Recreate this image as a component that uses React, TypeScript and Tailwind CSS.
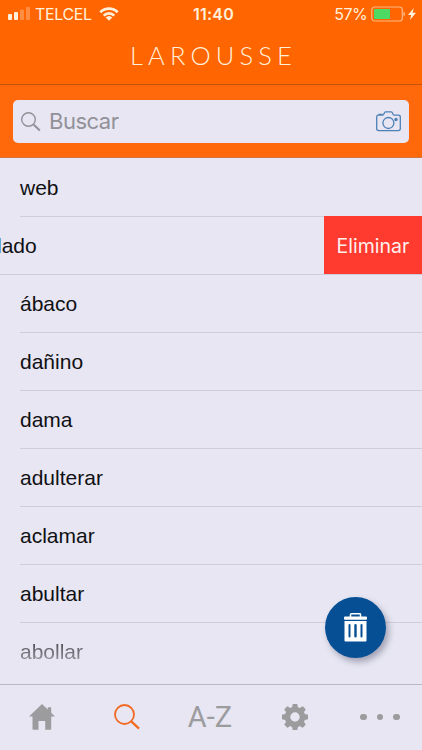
import React from "react";

const words = ["ábaco", "dañino", "dama", "adulterar", "aclamar", "abultar"];

function StatusBar() {
  return (
    <div className="grid h-7 grid-cols-3 items-center pl-2 pr-[6px] text-[16px] leading-none text-[#fff0dc] font-['Inter',sans-serif]">
      <div className="flex items-center">
        <svg width="22" height="14" viewBox="0 0 22 14" fill="currentColor">
          <rect x="0" y="7" width="4" height="6" rx="1" />
          <rect x="6" y="5" width="4" height="8" rx="1" />
          <rect x="12" y="2.5" width="4" height="10.5" rx="1" opacity=".3" />
          <rect x="18" y="0" width="4" height="13" rx="1" opacity=".3" />
        </svg>
        <span className="ml-[5px] w-[57px] whitespace-nowrap text-[16px] tracking-[-0.35px]">TELCEL</span>
        <svg className="ml-[7px]" width="20" height="14" viewBox="0 0 20 14" fill="none" stroke="currentColor" strokeWidth="2.7">
          <path d="M1.3 5.2a12.5 12.5 0 0 1 17.4 0" />
          <path d="M4.7 8.6a7.6 7.6 0 0 1 10.6 0" />
          <path d="M10 13.8 6.7 10.6a4.8 4.8 0 0 1 6.6 0Z" fill="currentColor" stroke="none" />
        </svg>
      </div>
      <div className="pl-[3px] text-center text-[16px] font-semibold tracking-[0.2px]">11:40</div>
      <div className="flex items-center justify-end">
        <span className="tracking-[-0.6px]">57%</span>
        <svg className="ml-[4px]" width="35" height="16" viewBox="0 0 35 16" fill="none">
          <rect x=".8" y="1" width="30.5" height="14" rx="2.8" stroke="#fff0dc" strokeOpacity=".6" strokeWidth="1.2" />
          <rect x="3" y="3" width="16" height="10" fill="#4cd964" />
          <path d="M32.5 5.5c2 .7 2 4.3 0 5Z" fill="#fff0dc" opacity=".6" />
        </svg>
        <svg className="ml-[2px]" width="8" height="12" viewBox="0 0 8 12" fill="currentColor">
          <path d="M5.7 0 0 7h3.2L2 12l6-7.2H4.7Z" />
        </svg>
      </div>
    </div>
  );
}

function SearchBar() {
  return (
    <div className="h-[74px] border-b border-t border-b-[#d3733e] border-t-[#c65108] bg-[#ff690b] px-[13px] pt-[15px]">
      <div className="flex h-[43px] items-center rounded-[5px] bg-[#e7e6f2] pl-2 pr-[8px]">
        <svg width="20" height="20" viewBox="0 0 20 20" fill="none" stroke="#929199" strokeWidth="1.4">
          <circle cx="7.5" cy="7.5" r="6.8" />
          <path d="m12.5 12.5 6.3 6" strokeWidth="2" />
        </svg>
        <span className="ml-2 pb-[2px] text-[22px] leading-none tracking-[-0.5px] text-[#929199] font-['Inter',sans-serif]">Buscar</span>
        <svg className="ml-auto" width="25" height="21" viewBox="0 0 25 21" fill="none" stroke="#4d81b5" strokeWidth="1.3">
          <path d="M2.5 4.2h4.2c1.5 0 1.3-3.3 2.8-3.3h5.8c1.5 0 1.3 3.3 2.8 3.3h4.2c1.2 0 2 .7 2 1.8v11.8c0 1.1-.8 1.8-2 1.8H2.5c-1.2 0-1.8-.7-1.8-1.8V6c0-1.1.6-1.8 1.800-1.8Z" />
          <circle cx="12.4" cy="12" r="5.5" />
          <circle cx="20" cy="8.5" r="1.1" fill="#4d81b5" />
          <path d="M3 4V3.3h3V4" />
        </svg>
      </div>
    </div>
  );
}

function Row({ children }: { children: React.ReactNode }) {
  return (
    <li className="h-[58px] pl-5">
      <div className="flex h-full items-center border-b border-[#cecdda]">{children}</div>
    </li>
  );
}

function TabBar() {
  return (
    <nav className="grid h-[66px] grid-cols-5 items-center border-t border-[#b9b8c6] bg-[#e7e6f2] pb-[2px] text-[#9c9c9e]">
      <div className="flex justify-center">
        <svg width="26" height="26" viewBox="0 0 26 26" fill="currentColor">
          <path d="M13 0 0 12.5h3.5V25q0 .8.8.8H9.5V17h6.700v8.8h5.2q.8 0 .8-.8V12.5H26l-3.8-3.7V3.200h-3.400v2.400Z" />
        </svg>
      </div>
      <div className="flex justify-center">
        <svg width="26" height="26" viewBox="0 0 26 26" fill="none" stroke="#f26a22">
          <circle cx="10.5" cy="10.5" r="9.5" strokeWidth="1.8" />
          <path d="m17 17.2 8 7.5" strokeWidth="2.3" />
        </svg>
      </div>
      <div className="pr-[2px] pt-px text-center text-[29px] leading-none font-['Roboto',sans-serif]">A-Z</div>
      <div className="flex justify-center">
        <svg width="26" height="26" viewBox="-13 -13 26 26" fill="none" stroke="currentColor">
          <circle r="7.5" strokeWidth="5.6" />
          <g fill="currentColor" stroke="none">
            <path id="tooth" d="m-3.2-8 .8-4.4q.1-.6.7-.6h3.4q.6 0 .7.6l.8 4.4Z" />
            <use href="#tooth" transform="rotate(45)" />
            <use href="#tooth" transform="rotate(90)" />
            <use href="#tooth" transform="rotate(135)" />
            <use href="#tooth" transform="rotate(180)" />
            <use href="#tooth" transform="rotate(225)" />
            <use href="#tooth" transform="rotate(270)" />
            <use href="#tooth" transform="rotate(315)" />
          </g>
        </svg>
      </div>
      <div className="flex justify-center gap-[10px] pt-px">
        <i className="size-[6.5px] rounded-full bg-current" />
        <i className="size-[6.5px] rounded-full bg-current" />
        <i className="size-[6.5px] rounded-full bg-current" />
      </div>
    </nav>
  );
}

export default function App() {
  return (
    <div className="relative flex h-[750px] w-[422px] flex-col overflow-hidden bg-[#e7e6f2]">
      <header className="h-[84px] bg-[#ff6500]">
        <StatusBar />
        <h1 className="pl-[130px] pt-[13px] text-[25.5px] font-light leading-[28px] tracking-[5.15px] text-[#fff0dc] font-['Lato',sans-serif]">LAROUSSE</h1>
      </header>
      <SearchBar />
      <ul className="h-[526px] overflow-hidden pt-px text-[21px] leading-none text-[#101014] font-['Liberation_Sans',Arial,sans-serif]">
        <Row>web</Row>
        <li className="flex h-[58px] items-center border-b border-[#cecdda]">
          <span className="-ml-[3px]">lado</span>
          <button className="-mt-px ml-auto h-[58px] w-[98px] bg-[#ff3b30] pt-[3px] text-[19.5px] text-[#fff0ee] font-['Inter',sans-serif]">Eliminar</button>
        </li>
        {words.map((word) => <Row key={word}>{word}</Row>)}
        <li className="flex h-[58px] items-center pl-5">
          <span className="bg-linear-to-b from-[#44444b] to-[#a2a1aa] bg-clip-text leading-[24px] text-transparent">abollar</span>
        </li>
      </ul>
      <TabBar />
      <button className="absolute left-[325px] top-[597px] flex size-[61px] items-center justify-center rounded-full bg-[#064f95] shadow-[3px_4px_6px_rgba(60,60,90,0.4)]">
        <svg width="23" height="29" viewBox="0 0 23 29" fill="none">
          <path d="M6.5 4V1.5q0-.7.7-.7h8.6q.7 0 .7.7V4" stroke="white" strokeWidth="1.5" />
          <rect x="0" y="3.4" width="23" height="3.4" rx="1" fill="white" />
          <path fillRule="evenodd" d="M.5 8h22v19.5q0 1-1 1h-20q-1 0-1-1ZM5.5 11q-1 0-1 1v11.5q0 1 1 1t1-1V12q0-1-1-1Zm6 0q-1.2 0-1.2 1v11.5q0 1 1.2 1t1.2-1V12q0-1-1.2-1Zm6 0q-1 0-1 1v11.5q0 1 1 1t1-1V12q0-1-1-1Z" fill="white" />
        </svg>
      </button>
    </div>
  );
}
